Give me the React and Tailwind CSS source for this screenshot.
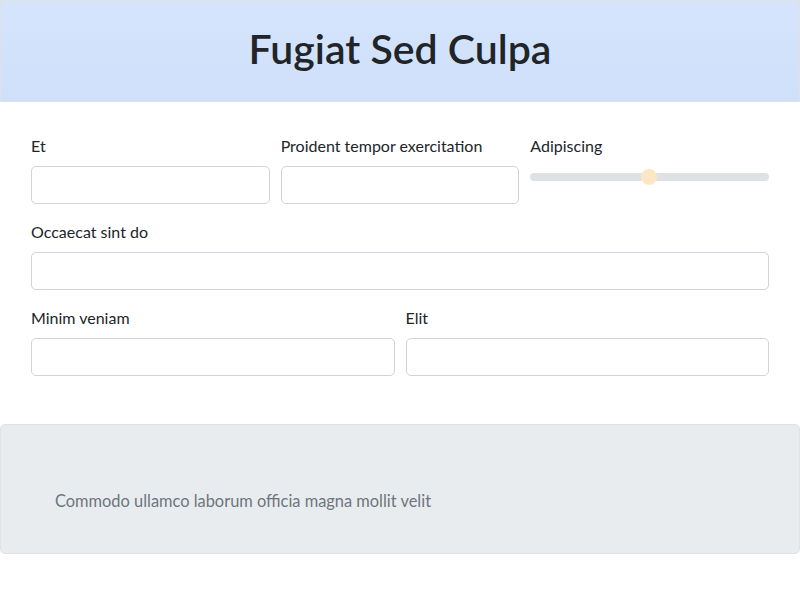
import React from 'react';

const font = { fontFamily: 'Lato, "Noto Sans", "Liberation Sans", sans-serif' };

function Field({ label }) {
  return (
    <div className="flex flex-col">
      <label className="text-[16px] leading-6 text-[#212529] mb-2">{label}</label>
      <input className="h-[38px] w-full rounded-[5px] border border-[#ced4da] bg-white px-3 outline-none" />
    </div>
  );
}

export default function App() {
  return (
    <div className="min-h-[600px] w-[800px] bg-white" style={font}>
      {/* Header */}
      <header className="border border-[#dee2e6] bg-gradient-to-b from-[#d6e4fc] to-[#cfe0fa] pt-[24px] pb-[28px] text-center">
        <h1 className="text-[41px] leading-[48px] font-semibold text-[#212529]">Fugiat Sed Culpa</h1>
      </header>

      {/* Form */}
      <section className="px-[31px] pt-[32px] flex flex-col gap-4">
        <div className="grid grid-cols-3 gap-[11px]">
          <Field label="Et" />
          <Field label="Proident tempor exercitation" />
          <div className="flex flex-col">
            <label className="text-[16px] leading-6 text-[#212529] mb-2">Adipiscing</label>
            <div className="relative h-[22px] flex items-center">
              <div className="h-2 w-full rounded-full bg-[#dee2e6]" />
              <div className="absolute left-[111px] top-[3px] h-4 w-4 rounded-full bg-[#fde6c5]" />
            </div>
          </div>
        </div>
        <Field label="Occaecat sint do" />
        <div className="grid grid-cols-2 gap-[11px]">
          <Field label="Minim veniam" />
          <Field label="Elit" />
        </div>
      </section>

      {/* Footer box */}
      <div className="mt-12 h-[130px] rounded-[5px] border border-[#dee2e6] bg-[#e9ecef] px-[54px] pt-[64px]">
        <p className="text-[16.4px] leading-6 text-[#6c757d]">Commodo ullamco laborum officia magna mollit velit</p>
      </div>
    </div>
  );
}
